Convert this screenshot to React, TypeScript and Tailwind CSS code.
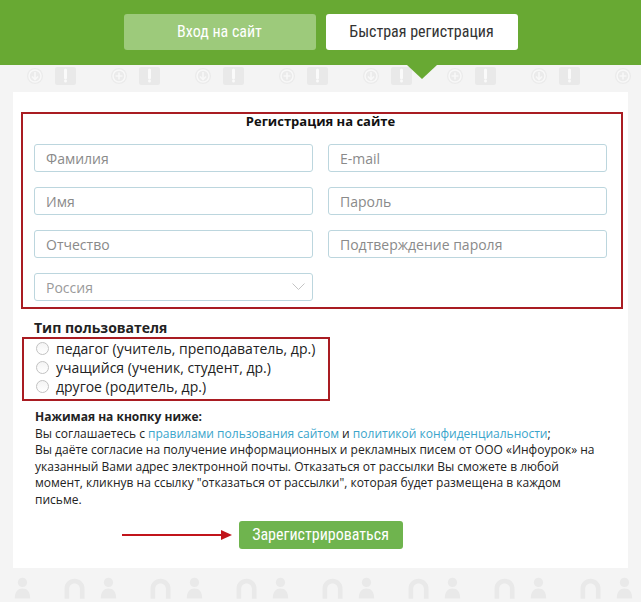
import React from "react";

const narrow = "font-['Liberation_Sans_Narrow','Roboto_Condensed','Arial_Narrow',sans-serif]";

function TopPattern() {
  return (
    <div className="flex h-[27px] overflow-hidden pt-[2px]">
      {Array.from({ length: 8 }).map((_, i) => (
        <div key={i} className="flex w-[84px] shrink-0 items-start">
          <svg className="ml-[26px]" width="18" height="18" viewBox="0 0 18 18">
            <circle cx="9" cy="9" r="8" fill="#ebebeb" />
            <circle cx="9" cy="9" r="6" fill="none" stroke="#f8f8f8" strokeWidth="1.5" />
            {i % 2 === 0 ? (
              <path d="M9 5v7M6 9.5l3 3 3-3" stroke="#f8f8f8" strokeWidth="1.6" fill="none" />
            ) : (
              <path d="M9 5.5v7M5.5 9h7" stroke="#f8f8f8" strokeWidth="1.6" fill="none" />
            )}
          </svg>
          <svg className="ml-[11px]" width="21" height="18" viewBox="0 0 21 18">
            <rect x="0" y="0" width="21" height="18" rx="2" fill="#e9e9e9" />
            <path d="M10.5 3v8" stroke="#fafafa" strokeWidth="3" strokeLinecap="round" />
            <circle cx="10.5" cy="14" r="1.5" fill="#fafafa" />
          </svg>
        </div>
      ))}
    </div>
  );
}

function BottomPattern() {
  return (
    <div className="flex h-[34px] overflow-hidden">
      {Array.from({ length: 8 }).map((_, i) => (
        <div key={i} className="flex w-[86px] shrink-0 items-end">
          <svg className="ml-[14px]" width="22" height="30" viewBox="0 0 22 30">
            <circle cx="11" cy="9" r="6" fill="#e9e9e9" />
            <path d="M1 30c0-9 4-13 10-13s10 4 10 13z" fill="#e9e9e9" />
          </svg>
          <svg className="ml-[32px]" width="30" height="28" viewBox="0 0 30 28">
            <path d="M2 28V15C2 7 8 2 15 2s13 5 13 13v13h-6V15c0-4-3-7-7-7s-7 3-7 7v13z" fill="#e9e9e9" />
          </svg>
        </div>
      ))}
    </div>
  );
}

function Field({ placeholder, select }: { placeholder: string; select?: boolean }) {
  return (
    <div className="flex h-[28px] items-center justify-between rounded-[3px] border border-[#bcd6de] bg-white px-[11px]">
      <span className={select ? "text-[14px] text-[#9a9a9a]" : "text-[14px] text-[#8a8a8a]"}>
        {placeholder}
      </span>
      {select && (
        <svg width="13" height="8" viewBox="0 0 13 8" className="mr-[-4px]">
          <path d="M0.5 0.5l6 6 6-6" stroke="#c4c4c4" strokeWidth="1" fill="none" />
        </svg>
      )}
    </div>
  );
}

function Radio({ label }: { label: string }) {
  return (
    <div className="flex h-[19px] items-center">
      <span className="ml-[12px] h-[13px] w-[13px] rounded-full border border-[#c2c2c2] bg-gradient-to-b from-[#f4f4f4] to-white" />
      <span className="ml-[7px] text-[14px] text-[#222]">{label}</span>
    </div>
  );
}

export default function App() {
  return (
    <div className="h-[602px] w-[641px] overflow-hidden bg-[#f4f4f4] font-['Open_Sans',sans-serif]">
      {/* шапка с вкладками */}
      <div className="relative flex h-[65px] justify-center gap-[10px] bg-[#68a933] pt-[14px]">
        <div className={`flex h-[36px] w-[192px] items-center justify-center rounded-[3px] bg-[#9dca7b] text-[16px] text-white ${narrow}`}>
          Вход на сайт
        </div>
        <div className={`flex h-[36px] w-[192px] items-center justify-center rounded-[3px] bg-white text-[16px] text-[#333] ${narrow}`}>
          Быстрая регистрация
        </div>
        <svg className="absolute left-[407px] top-[65px]" width="30" height="14" viewBox="0 0 30 14">
          <path d="M0 0h30L15 14z" fill="#68a933" />
        </svg>
      </div>

      <TopPattern />

      <div className="mx-[13px] h-[476px] bg-white pt-[20px]">
        <div className="ml-[8px] w-[602px] border-2 border-[#a91c22] pb-[6px] pl-[11px] pr-[14px]">
          <h2 className="text-center text-[13px] font-bold leading-[14px] text-[#111]">
            Регистрация на сайте
          </h2>
          <div className="mt-[16px] grid grid-cols-2 gap-x-[15px] gap-y-[15px]">
            <Field placeholder="Фамилия" />
            <Field placeholder="E-mail" />
            <Field placeholder="Имя" />
            <Field placeholder="Пароль" />
            <Field placeholder="Отчество" />
            <Field placeholder="Подтверждение пароля" />
            <Field placeholder="Россия" select />
          </div>
        </div>

        <div className="ml-[21px] mt-[9px] text-[14px] font-bold leading-[19px] text-[#222]">
          Тип пользователя
        </div>
        <div className="ml-[9px] w-[308px] border-2 border-[#a91c22] pb-[3px]">
          <Radio label="педагог (учитель, преподаватель, др.)" />
          <Radio label="учащийся (ученик, студент, др.)" />
          <Radio label="другое (родитель, др.)" />
        </div>

        <div className="ml-[22px] mt-[8px] whitespace-nowrap text-[12px] leading-[16.6px] text-[#222]">
          <b>Нажимая на кнопку ниже:</b>
          <br />
          Вы соглашаетесь с <a className="text-[#3aa5cb]">правилами пользования сайтом</a> и{" "}
          <a className="text-[#3aa5cb]">политикой конфиденциальности</a>;
          <br />
          Вы даёте согласие на получение информационных и рекламных писем от ООО «Инфоурок» на
          <br />
          указанный Вами адрес электронной почты. Отказаться от рассылки Вы сможете в любой
          <br />
          момент, кликнув на ссылку "отказаться от рассылки", которая будет размещена в каждом
          <br />
          письме.
        </div>

        <div className="mt-[12px] grid grid-cols-[1fr_auto_1fr] items-center">
          <svg className="mr-[7px] justify-self-end" width="110" height="10" viewBox="0 0 110 10">
            <path d="M0 5h100" stroke="#c1141b" strokeWidth="2" />
            <path d="M99 0l11 5-11 5z" fill="#c1141b" />
          </svg>
          <button className={`flex h-[28px] w-[164px] items-center justify-center rounded-[3px] bg-[#6fb44e] text-[16px] text-white ${narrow}`}>
            Зарегистрироваться
          </button>
          <div />
        </div>
      </div>

      <BottomPattern />
    </div>
  );
}
